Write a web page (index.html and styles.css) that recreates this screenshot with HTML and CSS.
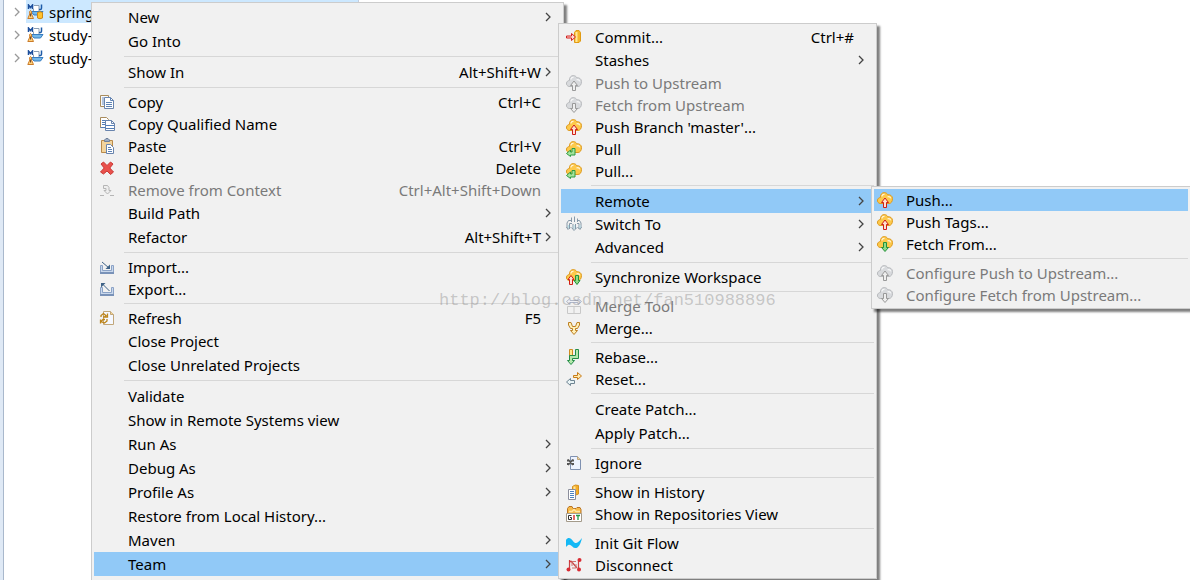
FILE: index.html
```html
<!DOCTYPE html>
<html lang="en">
<head>
<meta charset="UTF-8">
<meta name="viewport" content="width=device-width, initial-scale=1.0">
<title>Package Explorer</title>
<link rel="stylesheet" href="styles.css">
</head>
<body>
<!-- Shared icons -->
<svg class="sprite" aria-hidden="true">
  <symbol id="cloud" viewBox="0 0 16 16">
    <path d="M3 11.5C1 11 .3 9.600.5 8 .8 6.500 2 5.500 3.400 5.500 3.200 2.600 5 .6 7.200.6c1.800 0 3 .9 3.600 2.200 2.500-.4 4.600 1.200 4.700 3.600C15.600 9.500 14 11.500 12 11.500Z" fill="currentColor" stroke="var(--edge)"/>
    <path d="M5 4.500C5 3 6 2.200 7.500 2.400M10.500 5c1.500-.6 2.700 0 3.200 1.200" fill="none" stroke="#fff" stroke-width="1.2" opacity=".8"/>
  </symbol>
  <symbol id="up" viewBox="0 0 16 16">
    <path d="M8 6 4.500 10.500H6.500V15.500H9.500V10.500H11.500Z" fill="var(--pale)" stroke="var(--arrow)"/>
  </symbol>
  <symbol id="down" viewBox="0 0 16 16">
    <path d="M8 15.500 4.500 11.500H6.500V6.500H9.500V11.500H11.500Z" fill="var(--pale)" stroke="var(--arrow)"/>
  </symbol>
  <symbol id="push" viewBox="0 0 16 16"><use href="#cloud"/><use href="#up" class="red"/></symbol>
  <symbol id="fetch" viewBox="0 0 16 16"><use href="#cloud"/><use href="#down" class="green"/></symbol>
  <symbol id="push-off" viewBox="0 0 16 16"><g class="grey"><use href="#cloud"/><use href="#up"/></g></symbol>
  <symbol id="fetch-off" viewBox="0 0 16 16"><g class="grey"><use href="#cloud"/><use href="#down"/></g></symbol>
  <symbol id="pull" viewBox="0 0 16 16">
    <use href="#cloud"/>
    <path d="M.5 12.500 4.500 9V11H6V7.500H9V14H4.500V15.500Z" fill="#a5e39c" stroke="#2c9a43"/>
  </symbol>
  <symbol id="sync" viewBox="0 0 16 16">
    <use href="#cloud"/>
    <path d="M5 6.500 2 10.500H3.500V15.500H6.500V10.500H8Z" fill="#ffe0d0" stroke="#cf1d16"/>
    <path d="M11 15.500 8 11.500H9.500V6.500H12.500V11.500H14Z" fill="#8fdb86" stroke="#23913a"/>
  </symbol>
  <symbol id="commit" viewBox="0 0 16 16">
    <path d="M8.500 3.500 10 1.500H13L14.500 3.500V12L13 13.500H8.500Z" fill="#f5b72b" stroke="#e09a13"/>
    <path d="M10.500 3v10" stroke="#ffe79a" stroke-width="2"/>
    <path d="M.5 7h5V4.500L9.500 8 5.500 11.500V9h-5Z" fill="#ffdad0" stroke="#d32020"/>
  </symbol>
  <symbol id="copy" viewBox="0 0 16 16">
    <path d="M1.500 1.500h8v11h-8z" fill="#f8f9fc" stroke="#a98c5d"/>
    <path d="M3 4h2M3 6h2M3 8h2M3 10h2" stroke="#6e8fbc"/>
    <path d="M5.500 3.500h6l3 3v8h-9z" fill="#fff" stroke="#6984ad"/>
    <path d="M11.500 3.500v3h3M7 8.500h6M7 10.500h6M7 12.500h6" fill="none" stroke="#5e83b5"/>
  </symbol>
  <symbol id="copyname" viewBox="0 0 16 16">
    <path d="M1.500 1.500h6l2 2v8h-8z" fill="#fff" stroke="#a98c5d"/>
    <path d="M3 4.500h5M3 6.500h3M3 8.500h3" stroke="#547eb7"/>
    <path d="M6.500 4.500h6l3 3v7h-9z" fill="#fff" stroke="#6984ad"/>
    <path d="M12.500 4.500v3h3" fill="none" stroke="#6984ad"/>
    <path d="M7 9.500h8M7 12.500h8M1.500 11.500h5" stroke="#547eb7"/>
  </symbol>
  <symbol id="paste" viewBox="0 0 16 16">
    <path d="M2.500 2.500h11v12h-11z" fill="#f2d49d" stroke="#b98a4a"/>
    <path d="M5.500 3.500V2l1.500-1.500h2L10.500 2v1.500Z" fill="#9bacc4" stroke="#6e7f98"/>
    <path d="M7.500 6.500h4l3 3v6h-7z" fill="#fff" stroke="#6984ad"/>
    <path d="M9 9.500h3M9 11.500h4M9 13.500h4" stroke="#5e83b5"/>
  </symbol>
  <symbol id="delete" viewBox="0 0 16 16">
    <path d="M2 4 4.500 2 8 5.500 11.500 2 14 4 10.800 8 14.500 12 11.500 14.500 8 11 4.500 14 1.500 12 5.200 8Z" fill="#e9504b" stroke="#c93834"/>
  </symbol>
  <symbol id="context" viewBox="0 0 16 16">
    <path d="M1 13.500h4M11 13.500h4" stroke="#b5b5b5"/>
    <path d="M4.500 3.500h4l1.500 2v3h2L8.500 12 5 8.500h2v-2H4.500Z" fill="#eee" stroke="#b5b5b5"/>
  </symbol>
  <symbol id="tray" viewBox="0 0 16 16">
    <path d="M1.500 6.500h2v5h9v-5h2v8h-13z" fill="#c9d8ec" stroke="#8aa2c6"/>
    <path d="M1 14h14" stroke="#7992b8" stroke-width="2"/>
  </symbol>
  <symbol id="import" viewBox="0 0 16 16">
    <use href="#tray"/><path d="M3 3l7 6" fill="none" stroke="#3f6287"/><path d="M11 5.500V10H6.500Z" fill="#3f6287"/>
  </symbol>
  <symbol id="export" viewBox="0 0 16 16">
    <use href="#tray"/><path d="M3.500 3l7 7" fill="none" stroke="#3f6287"/><path d="M2 6.500V2h4.500Z" fill="#3f6287"/>
  </symbol>
  <symbol id="refresh" viewBox="0 0 16 16">
    <path d="M4.500 1.500h7l3 3v10h-10z" fill="#f5f8ff" stroke="#c1a77a"/>
    <path d="M11.500 1.500v3h3" fill="#f7d695" stroke="#c1a77a"/>
    <path d="M2 7V5.500L4.500 3.500 7 5.500 5.500 7H4M8 9v2l-2.500 2L2 11.500 4 9.500h2M1.500 9.500v4M8.500 3.500V7H5" fill="none" stroke="#bd8419" stroke-width="1.3"/>
  </symbol>
  <symbol id="switch" viewBox="0 0 16 16">
    <path d="M5.500 6V1.500M8.500 6V.5M11.500 6V2.500M5 4.500H2.500L1 7v5M6 7.500H3.500V13M12 4.500h1.500L15 7v5M11 7.500h2V13M7 13V8M9.500 13V8M.5 11 2 13.500 4.500 11M5.500 11.500 8 14.500l3-3M11.500 11l2.500 2.500 1.500-2.500" fill="none" stroke="#8799a8"/>
    <path d="M8.200 9v4M2.500 9v3M14 9v3" stroke="#b8e0e8"/>
  </symbol>
  <symbol id="mergetool" viewBox="0 0 16 16">
    <path d="M.5 3.500 4 .5V2.500H12V.5L15.500 3.500 12 6.500V4.500H4V6.500Z" fill="#eef0f6" stroke="#b1b7c8"/>
    <path d="M1.500 8.500h13v7h-13zM8 8v7" fill="none" stroke="#c8c8c8"/>
  </symbol>
  <symbol id="merge" viewBox="0 0 16 16">
    <path d="M2.500 2.500H5L6.500 6.500h3L11 2.500h2.500V5L11.500 8.500h-2V10.500h2L8 14.500 4.500 10.500h2V8.500h-2L2.500 5Z" fill="#fff0b8" stroke="#bd7f22"/>
  </symbol>
  <symbol id="rebase" viewBox="0 0 16 16">
    <path d="M3.500.5h3v11h-3z" fill="#ffe78d" stroke="#d08b20"/>
    <path d="M9.500.5h3v9h-6v2h2L5 15.500 1.500 11.500h2V6.500h6Z" fill="#b5e8ad" stroke="#238d48"/>
  </symbol>
  <symbol id="reset" viewBox="0 0 16 16">
    <path d="M7.500 4.500h4V1.500L15.500 5 11.500 8.500V6.500h-4Z" fill="#ffebae" stroke="#c77b19"/>
    <path d="M8.500 9.500h-4V7.500L.5 11l4 3.500V12.500h4Z" fill="#eaf5f7" stroke="#6f8492"/>
  </symbol>
  <symbol id="ignore" viewBox="0 0 16 16">
    <path d="M4.500 1.500h7l3 3v10h-10z" fill="#edf3ff" stroke="#7f91b1"/>
    <path d="M11.500 1.500v3h3" fill="#f7d695" stroke="#c1a77a"/>
    <path d="M2 4.500 7 10M7 4.500 2 10M1 5.500h2M6 5.500h2M1 9h2M6 9h2" stroke="#555" stroke-width="1.8"/>
  </symbol>
  <symbol id="history" viewBox="0 0 16 16">
    <path d="M6.500 2.500Q9 0 12.500 1.500V10Q10 12 6.500 10Z" fill="#f5ae29" stroke="#d59120"/>
    <path d="M8.500 2.500V10" stroke="#ffe69a" stroke-width="2"/>
    <path d="M2.500 5.500h7v10h-7z" fill="#fff" stroke="#8b8e9c"/>
    <path d="M4 7.500h4M4 9.500h4M4 11.500h4M4 13.500h4" stroke="#4d83c0"/>
  </symbol>
  <symbol id="git" viewBox="0 0 16 16">
    <path d="M1.500 13V2.500L3 .5h3l1 2h3l1-1h3l1 2V13Z" fill="#f7bb4a" stroke="#b97424"/>
    <path d="M3 5.500h3l2-2 2 2h4" fill="none" stroke="#ffe7a5" stroke-width="1.500"/>
    <path d="M.5 7.500h15v8H.5z" fill="#fff" stroke="#a49b8b"/>
    <path d="M5.500 9.500h-3v4h3v-2H4" fill="none" stroke="#333"/>
    <path d="M8 9v5" stroke="#dc3434" stroke-width="1.500"/>
    <path d="M10 9.500h4M12 9.500V14" stroke="#249844" stroke-width="1.300"/>
  </symbol>
  <symbol id="flow" viewBox="0 0 16 16">
    <path d="M0 5C2 2 4.500 2.500 7 6 9.500 9.500 11.500 8.500 16 3 14.500 10 12 13.500 9 13 5.500 12.500 4.500 6.500 0 12Z" fill="#14b8f5"/>
  </symbol>
  <symbol id="disconnect" viewBox="0 0 16 16">
    <path d="M3.500 3v10M12.500 3v10M5 4l6 7" fill="none" stroke="#c74444" stroke-width="1.200"/>
    <path d="M6 9V4.500h4M10 7v4H6" fill="none" stroke="#ce7470"/>
    <circle cx="2.500" cy="12.500" r="2" fill="#d92c34"/><circle cx="13.500" cy="3" r="2" fill="#d92c34"/><circle cx="13" cy="12.500" r="2" fill="#d92c34"/><circle cx="4" cy="4.500" r="1" fill="#d92c34"/>
  </symbol>
  <symbol id="project" viewBox="0 0 18 16">
    <path d="M1.500 5V1L3.500 3.500 5.500 1V5" fill="none" stroke="#1d4f9c" stroke-width="1.500"/>
    <path d="M7 1.500h5v6H6.500v-3" fill="#fff" stroke="#8a9eb5"/>
    <path d="M14.500.5V4Q14.500 6 12 5.500" fill="none" stroke="#1d5ba7" stroke-width="1.500"/>
    <path d="M4 7.500h12L13.500 11H7Z" fill="#74b8e8" stroke="#377cc0"/>
    <path d="M3.500 6.500Q5 7 4.500 10L6.500 14.500H.8L2.800 10Q2 7 3.500 6.500Z" fill="#ffd27b" stroke="#cb7b29"/>
    <path d="M3.600 9.500v3" stroke="#5e3b25"/>
  </symbol>
  <symbol id="arrow" viewBox="0 0 8 10">
    <path d="M2 1l4 4-4 4" fill="none" stroke="currentColor" stroke-width="1.300"/>
  </symbol>
</svg>

<main class="explorer">
  <ul class="tree">
    <li class="node selected">
      <svg class="twisty"><use href="#arrow"/></svg>
      <svg class="project"><use href="#project"/><path d="M10.500 8.500Q13 7 15.500 8.500V14Q13 15.500 10.500 14Z" fill="#ffc22d" stroke="#d08715"/></svg>
      <span>spring</span>
    </li>
    <li class="node">
      <svg class="twisty"><use href="#arrow"/></svg>
      <svg class="project"><use href="#project"/></svg>
      <span>study-</span>
    </li>
    <li class="node">
      <svg class="twisty"><use href="#arrow"/></svg>
      <svg class="project"><use href="#project"/></svg>
      <span>study-</span>
    </li>
  </ul>
</main>

<!-- Project menu -->
<nav class="menu menu-project" aria-label="Project">
  <button class="item">New<svg class="more"><use href="#arrow"/></svg></button>
  <button class="item">Go Into</button>
  <hr>
  <button class="item">Show In<kbd>Alt+Shift+W</kbd><svg class="more"><use href="#arrow"/></svg></button>
  <hr>
  <button class="item has-icon"><svg class="icon"><use href="#copy"/></svg>Copy<kbd>Ctrl+C</kbd></button>
  <button class="item has-icon"><svg class="icon"><use href="#copyname"/></svg>Copy Qualified Name</button>
  <button class="item has-icon"><svg class="icon"><use href="#paste"/></svg>Paste<kbd>Ctrl+V</kbd></button>
  <button class="item has-icon"><svg class="icon"><use href="#delete"/></svg>Delete<kbd>Delete</kbd></button>
  <button class="item has-icon" disabled><svg class="icon"><use href="#context"/></svg>Remove from Context<kbd>Ctrl+Alt+Shift+Down</kbd></button>
  <button class="item">Build Path<svg class="more"><use href="#arrow"/></svg></button>
  <button class="item">Refactor<kbd>Alt+Shift+T</kbd><svg class="more"><use href="#arrow"/></svg></button>
  <hr>
  <button class="item has-icon"><svg class="icon"><use href="#import"/></svg>Import...</button>
  <button class="item has-icon"><svg class="icon"><use href="#export"/></svg>Export...</button>
  <hr>
  <button class="item has-icon"><svg class="icon"><use href="#refresh"/></svg>Refresh<kbd>F5</kbd></button>
  <button class="item">Close Project</button>
  <button class="item">Close Unrelated Projects</button>
  <hr>
  <button class="item">Validate</button>
  <button class="item">Show in Remote Systems view</button>
  <button class="item">Run As<svg class="more"><use href="#arrow"/></svg></button>
  <button class="item">Debug As<svg class="more"><use href="#arrow"/></svg></button>
  <button class="item">Profile As<svg class="more"><use href="#arrow"/></svg></button>
  <button class="item">Restore from Local History...</button>
  <button class="item">Maven<svg class="more"><use href="#arrow"/></svg></button>
  <button class="item active">Team<svg class="more"><use href="#arrow"/></svg></button>
</nav>

<!-- Team submenu -->
<nav class="menu menu-team" aria-label="Team">
  <button class="item has-icon"><svg class="icon"><use href="#commit"/></svg>Commit...<kbd>Ctrl+#</kbd></button>
  <button class="item">Stashes<svg class="more"><use href="#arrow"/></svg></button>
  <button class="item has-icon" disabled><svg class="icon"><use href="#push-off"/></svg>Push to Upstream</button>
  <button class="item has-icon" disabled><svg class="icon"><use href="#fetch-off"/></svg>Fetch from Upstream</button>
  <button class="item has-icon"><svg class="icon"><use href="#push"/></svg>Push Branch 'master'...</button>
  <button class="item has-icon"><svg class="icon"><use href="#pull"/></svg>Pull</button>
  <button class="item has-icon"><svg class="icon"><use href="#pull"/></svg>Pull...</button>
  <hr>
  <button class="item active">Remote<svg class="more"><use href="#arrow"/></svg></button>
  <button class="item has-icon"><svg class="icon"><use href="#switch"/></svg>Switch To<svg class="more"><use href="#arrow"/></svg></button>
  <button class="item">Advanced<svg class="more"><use href="#arrow"/></svg></button>
  <hr>
  <button class="item has-icon"><svg class="icon"><use href="#sync"/></svg>Synchronize Workspace</button>
  <hr>
  <button class="item has-icon" disabled><svg class="icon"><use href="#mergetool"/></svg>Merge Tool</button>
  <button class="item has-icon"><svg class="icon"><use href="#merge"/></svg>Merge...</button>
  <hr>
  <button class="item has-icon"><svg class="icon"><use href="#rebase"/></svg>Rebase...</button>
  <button class="item has-icon"><svg class="icon"><use href="#reset"/></svg>Reset...</button>
  <hr>
  <button class="item">Create Patch...</button>
  <button class="item">Apply Patch...</button>
  <hr>
  <button class="item has-icon"><svg class="icon"><use href="#ignore"/></svg>Ignore</button>
  <hr>
  <button class="item has-icon"><svg class="icon"><use href="#history"/></svg>Show in History</button>
  <button class="item has-icon"><svg class="icon"><use href="#git"/></svg>Show in Repositories View</button>
  <hr>
  <button class="item has-icon"><svg class="icon"><use href="#flow"/></svg>Init Git Flow</button>
  <button class="item has-icon"><svg class="icon"><use href="#disconnect"/></svg>Disconnect</button>
</nav>

<!-- Remote submenu -->
<nav class="menu menu-remote" aria-label="Remote">
  <button class="item has-icon active"><svg class="icon"><use href="#push"/></svg>Push...</button>
  <button class="item has-icon"><svg class="icon"><use href="#push"/></svg>Push Tags...</button>
  <button class="item has-icon"><svg class="icon"><use href="#fetch"/></svg>Fetch From...</button>
  <hr>
  <button class="item has-icon" disabled><svg class="icon"><use href="#push-off"/></svg>Configure Push to Upstream...</button>
  <button class="item has-icon" disabled><svg class="icon"><use href="#fetch-off"/></svg>Configure Fetch from Upstream...</button>
</nav>

<div class="watermark">http://blog.csdn.net/fan510988896</div>
</body>
</html>
```
FILE: styles.css
```css
body {
  margin: 0;
  height: 100vh;
  overflow: hidden;
  position: relative;
  background: #fff;
  color: #000;
  font: 15px/22px "Noto Sans", "Open Sans", sans-serif;
}
.sprite {
  position: absolute;
  width: 0;
  height: 0;
}

/* Explorer behind the menus */
.explorer {
  height: 100%;
  box-sizing: border-box;
  border-left: 3px solid #dfe9f5;
}
.tree {
  height: 100%;
  box-sizing: border-box;
  width: 30%;
  margin: 0;
  padding: 0;
  list-style: none;
  border-left: 1px solid #a9b8cc;
  border-right: 1px solid #c5cede;
}
.node {
  display: flex;
  align-items: center;
  height: 23px;
  padding-left: 9px;
}
.node.selected {
  background: linear-gradient(to right, transparent 22px, #cce8ff 22px);
}
.node span {
  margin-left: 4px;
}
.twisty {
  width: 8px;
  height: 10px;
  margin-right: 6px;
  color: #999;
}
.project {
  width: 18px;
  height: 16px;
}

/* Menus */
.menu {
  position: absolute;
  display: flex;
  flex-direction: column;
  box-sizing: border-box;
  padding: 2px;
  border: 1px solid #ccc;
  background: #f1f1f1;
  box-shadow: 3px 3px 2px rgba(0, 0, 0, 0.5);
}
.menu-project {
  left: 91px;
  top: 2px;
  width: 473px;
  padding-bottom: 4px;
  border-bottom: 0;
}
.menu-team {
  left: 558px;
  top: 23px;
  width: 319px;
}
.menu-remote {
  left: 871px;
  top: 186px;
  right: 0;
  border-right: 0;
}
.item {
  display: flex;
  align-items: center;
  height: 24px;
  padding: 0 9px 0 34px;
  border: 0;
  background: none;
  color: inherit;
  font: inherit;
  text-align: left;
}
.item.has-icon {
  height: 22px;
  padding-left: 5px;
}
.menu-remote .item.has-icon {
  padding-left: 3px;
}
.item.active {
  background: #91c9f7;
}
.item:disabled {
  color: #7a7a7a;
}
.item kbd {
  margin-left: auto;
  margin-right: 11px;
  font: inherit;
}
.item kbd:not(:last-child) {
  margin-right: 3px;
}
.icon {
  width: 16px;
  height: 16px;
  margin-right: 13px;
  color: #fdc94b;
  --edge: #dd9a22;
}
.more {
  width: 8px;
  height: 10px;
  margin-left: auto;
  color: #444;
}
kbd + .more {
  margin-left: 0;
}
.menu hr {
  width: auto;
  height: 1px;
  margin: 3px 0 3px 30px;
  border: 0;
  background: #d7d7d7;
}
.menu-remote hr {
  margin-left: 28px;
}

/* Icon colours */
.red {
  --arrow: #cf1d16;
  --pale: #ffe0d0;
}
.green {
  --arrow: #23913a;
  --pale: #8fdb86;
}
.grey {
  color: #d8dadd;
  --edge: #b8babd;
  --arrow: #999;
  --pale: #eee;
}

.watermark {
  position: absolute;
  left: 439px;
  top: 290px;
  color: rgba(130, 130, 130, 0.4);
  font: 17px/22px "Liberation Mono", monospace;
  pointer-events: none;
}
```
